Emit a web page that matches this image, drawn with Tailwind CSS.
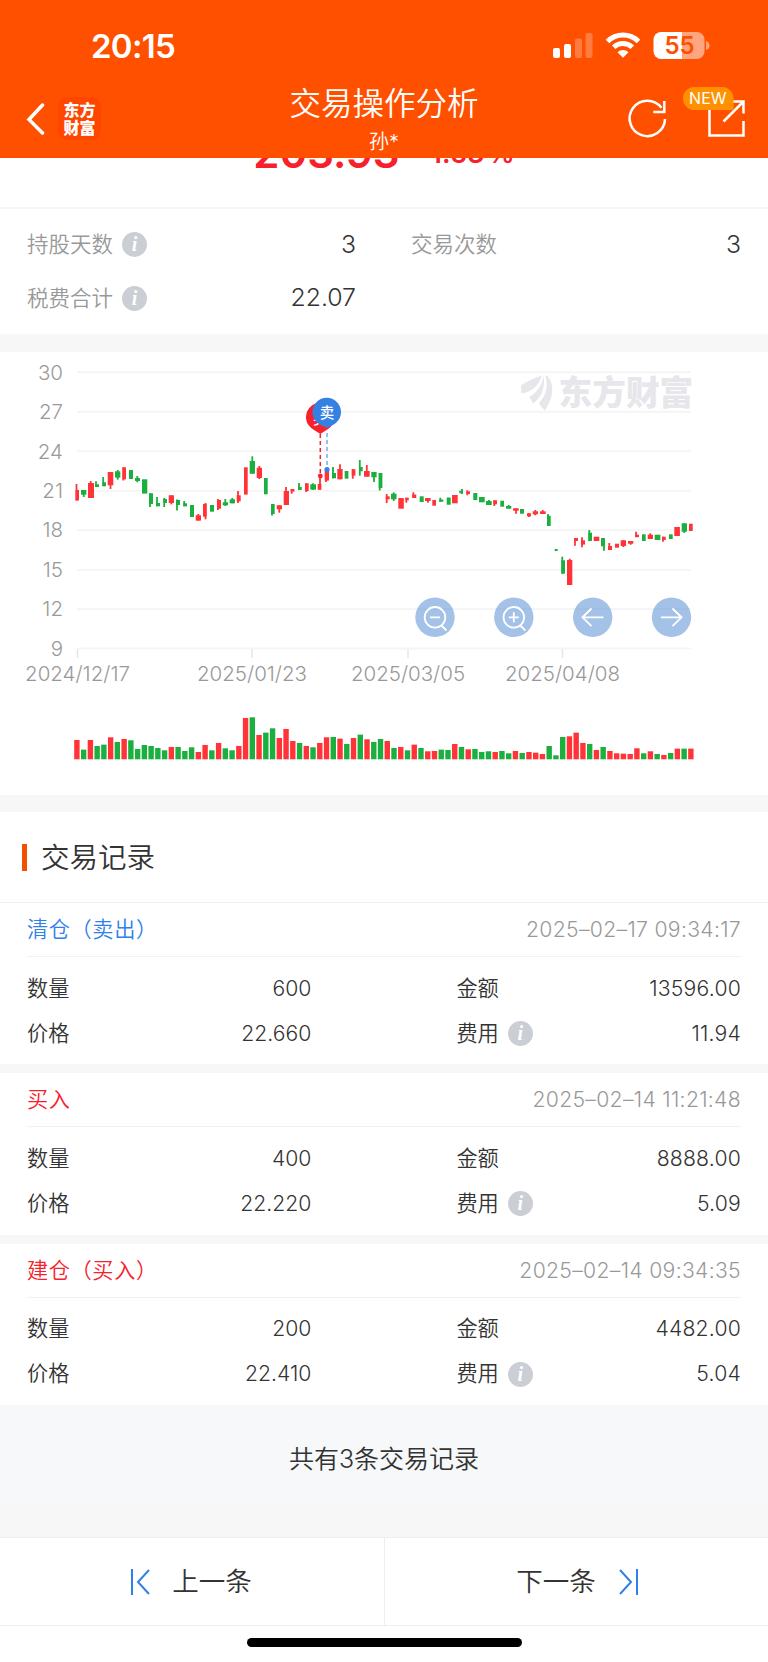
<!DOCTYPE html>
<html lang="zh-CN">
<head>
    <meta charset="UTF-8">
    <meta name="viewport" content="width=device-width, initial-scale=1.0">
    <title>交易操作分析</title>
    <script src="https://cdn.jsdelivr.net/npm/@tailwindcss/browser@4"></script>
</head>
<body class="bg-white font-['Inter','Noto_Sans_CJK_SC',sans-serif] font-[350] text-[#333]">
    <div class="w-[768px] h-[1662px] flex flex-col overflow-hidden">
        <!-- 顶部 -->
        <header class="h-[158px] shrink-0 bg-[#ff5000] text-white flex flex-col">
            <div class="h-[84px] pt-2 pl-[91px] pr-[58px] flex items-center justify-between">
                <span class="text-[33px] font-semibold leading-none tracking-[-0.7px]">20:15</span>
                <svg class="w-[158px] h-[28px]" viewBox="552 32 158 28">
                    <g fill="#fff">
                        <rect x="553" y="48" width="7" height="10" rx="2"/>
                        <rect x="564" y="44" width="7" height="14" rx="2"/>
                        <rect x="575" y="38.500" width="7" height="19.500" rx="2" opacity=".25"/>
                        <rect x="585.500" y="33" width="7" height="25" rx="2" opacity=".25"/>
                    </g>
                    <g fill="none" stroke="#fff" stroke-width="5">
                        <path d="M607.500 41.500a22 22 0 0 1 31 0"/>
                        <path d="M613.700 47.300a13.200 13.200 0 0 1 18.600 0"/>
                    </g>
                    <path d="M617.500 52.300a8 8 0 0 1 11 0L623 57.800z" fill="#fff"/>
                    <path d="M661 32h21v27h-21a7.500 7.500 0 0 1-7.500-7.500v-12a7.500 7.500 0 0 1 7.500-7.500z" fill="#fff"/>
                    <path d="M682 32h15a7.500 7.500 0 0 1 7.500 7.500v12a7.500 7.500 0 0 1-7.500 7.500h-15z" fill="#ffa680"/>
                    <path d="M706 41q3.500 1 3.500 4.500t-3.500 4.500z" fill="#ffa680"/>
                    <text x="679.500" y="54" text-anchor="middle" font-size="24" font-weight="600" fill="#ff5000">55</text>
                </svg>
            </div>
            <div class="relative h-[74px] flex items-start">
                <svg class="ml-[26px] mt-[19px] w-5 h-8" viewBox="0 0 20 32" fill="none" stroke="#fff" stroke-width="3.500" stroke-linecap="round"><path d="M16.500 2 3 16.500 16.500 30"/></svg>
                <div class="ml-3 mt-[13px] w-[43px] h-[43px] rounded-[9px] bg-[#ff4600] flex flex-col items-center justify-center text-[16px] leading-[18px] font-black">
                    <span>东方</span>
                    <span>财富</span>
                </div>
                <div class="absolute inset-x-0 top-[1px] flex flex-col items-center">
                    <span class="text-[31.500px] leading-[38px]">交易操作分析</span>
                    <span class="mt-[6px] text-[20px] leading-[26px]">孙*</span>
                </div>
                <svg class="ml-auto mr-[22px] mt-[2px] w-[122px] h-[54px]" viewBox="624 86 122 54">
                    <g fill="none" stroke="#fff" stroke-width="2.500">
                        <path d="M665 119a17.700 17.700 0 1 1-3.500-11.200"/>
                        <path d="M664.300 101v11h-11"/>
                        <path d="M709.500 105v30.500h34V121"/>
                        <path d="M732 101.500h11.500v12M743 102l-19.500 19.500"/>
                    </g>
                    <path d="M694.500 87H722a11.500 11.500 0 0 1 11.500 11.500V110h-39a11.500 11.500 0 0 1 0-23z" fill="#ff9100"/>
                    <text x="707.800" y="104" text-anchor="middle" font-size="16" font-weight="400" fill="#fff">NEW</text>
                </svg>
            </div>
        </header>

        <!-- 收益（滚动后被顶部遮住） -->
        <div class="h-[51px] shrink-0 overflow-hidden border-b-2 border-[#f7f7f7]">
            <div class="-mt-[30px] flex items-baseline justify-center gap-[31px] font-semibold text-[#f8202b]">
                <span class="text-[42px] leading-[50px]">203.93</span>
                <span class="relative -top-[5px] text-[27px]">1.53<span class="ml-[3px]">%</span></span>
            </div>
        </div>

        <!-- 概况 -->
        <section class="h-[125px] shrink-0 pt-[9px] px-[27px] text-[21.500px]">
            <div class="flex h-[53px] items-center">
                <div class="w-[329px] flex items-center">
                    <span class="text-[#999]">持股天数</span>
                    <i class="ml-[9px] size-[25px] rounded-full bg-[#cbced5] text-white text-[20px] leading-[24px] text-center font-bold font-['Liberation_Serif',serif]">i</i>
                    <span class="ml-auto text-[24.800px]">3</span>
                </div>
                <span class="ml-[55px] text-[#999]">交易次数</span>
                <span class="ml-auto text-[24.800px]">3</span>
            </div>
            <div class="flex h-[54px] w-[329px] items-center">
                <span class="text-[#999]">税费合计</span>
                <i class="ml-[9px] size-[25px] rounded-full bg-[#cbced5] text-white text-[20px] leading-[24px] text-center font-bold font-['Liberation_Serif',serif]">i</i>
                <span class="ml-auto text-[24.800px]">22.07</span>
            </div>
        </section>
        <div class="h-[18px] shrink-0 bg-[#f7f7f7]"></div>

        <!-- K线图 -->
        <svg class="w-[768px] h-[443px] shrink-0" viewBox="0 352 768 443">
            <g id="grid" font-size="20.500" fill="#999"></g>
            <g fill="#e6e6eb">
                <path d="M521 385.500Q530 379 542 375.500Q537 391 521.500 393.500zM529.500 397Q541 390 543.700 376Q546 394 533 403.500zM547 375.500Q558.500 389 545 410.500Q541 407 539 403Q550 391 545.500 376z"/>
                <text x="558.500" y="404.500" font-size="33.700" font-weight="900">东方财富</text>
            </g>
            <g id="candles"></g>
            <g id="volumes"></g>
            <path d="M320.300 434v42" stroke="#f8202b" stroke-width="1.500" stroke-dasharray="4 3"/>
            <path d="M327 433v36" stroke="#8fb8ee" stroke-width="1.800" stroke-dasharray="4 3"/>
            <circle cx="320.300" cy="476" r="2.400" fill="#f8202b"/>
            <circle cx="327" cy="469.700" r="2.600" fill="#3581e3"/>
            <path d="M320.300 434l-7-4.500a14.300 14.300 0 1 1 14 0z" fill="#f8202b"/>
            <text x="320.300" y="423.500" text-anchor="middle" font-size="14.500" font-weight="500" fill="#fff">买</text>
            <path d="M326.700 428l-7-3.500a14.300 14.300 0 1 1 14 0z" fill="#3581e3"/>
            <text x="327" y="417.500" text-anchor="middle" font-size="14.500" font-weight="500" fill="#fff">卖</text>
            <g fill="#5c93d6" fill-opacity=".56">
                <circle cx="435" cy="617.300" r="19.700"/>
                <circle cx="513.800" cy="617.300" r="19.700"/>
                <circle cx="592.700" cy="617.300" r="19.700"/>
                <circle cx="671.500" cy="617.300" r="19.700"/>
            </g>
            <g fill="none" stroke="#fff" stroke-width="1.800">
                <circle cx="435" cy="617.300" r="10.300"/>
                <path d="M430 617.300h10M441 625l5.500 5.500"/>
                <circle cx="513.800" cy="617.300" r="10.300"/>
                <path d="M508.800 617.300h10M513.800 612.300v10M519.800 625l5.500 5.500"/>
                <path d="M603.500 617.300h-21M591.500 608.500l-9 8.800 9 8.800"/>
                <path d="M661 617.300h21M672.500 608.500l9 8.800-9 8.800"/>
            </g>
        </svg>
        <div class="h-[17px] shrink-0 bg-[#f7f7f7]"></div>

        <!-- 交易记录 -->
        <h2 class="h-[91px] shrink-0 pl-[22px] pt-[1px] flex items-center border-b border-[#f2f2f2] text-[28.500px]">
            <span class="mr-[14px] w-[5px] h-[27px] bg-[#f05000]"></span><span class="pt-[2px]">交易记录</span>
        </h2>
        <div id="records" class="shrink-0 text-[21.200px]"></div>
        <div class="h-[100px] shrink-0 bg-[#f7f8fa] pt-[38px] text-center text-[25px] leading-[32px]">共有3条交易记录</div>
        <div class="h-[32px] shrink-0 bg-[#f7f7f7]"></div>

        <!-- 底部 -->
        <nav class="h-[89px] shrink-0 grid grid-cols-2 border-y border-[#eee] text-[26.500px]">
            <a class="flex items-center justify-center gap-[22px] pr-[2px]">
                <svg class="w-5 h-[26px]" viewBox="0 0 20 26" fill="none" stroke="#2f80ed" stroke-width="2"><path d="M2 0v26M19 1 8 13l11 12"/></svg>
                上一条
            </a>
            <a class="flex items-center justify-center gap-[23px] border-l border-[#eee] pl-[2px]">
                下一条
                <svg class="w-5 h-[26px]" viewBox="0 0 20 26" fill="none" stroke="#2f80ed" stroke-width="2"><path d="M18 0v26M1 1l11 12L1 25"/></svg>
            </a>
        </nav>
        <div class="mt-[12px] mx-auto w-[275px] h-[9px] shrink-0 rounded-full bg-black"></div>
    </div>

    <script>
        const RED = '#ff3338', GREEN = '#1aaf3e';

        // 坐标轴
        let grid = '';
        [30, 27, 24, 21, 18, 15, 12, 9].forEach((v, i) => {
            const y = 372.3 + i * 39.47;
            grid += `<path d="M77 ${y}H691" stroke="#f5f5f5" stroke-width="2"/><text x="63" y="${y + 7.3}" text-anchor="end">${v}</text>`;
        });
        [[77.5, '2024/12/17'], [252, '2025/01/23'], [408, '2025/03/05'], [562.5, '2025/04/08']].forEach(([x, t]) => {
            grid += `<path d="M${x} 649v9" stroke="#e6e6e6" stroke-width="1.5"/><text x="${x}" y="681" text-anchor="middle">${t}</text>`;
        });
        document.getElementById('grid').innerHTML = grid;

        // K线: 颜色 实体x y 宽 高 影线x 最高 最低
        const candles = `R 75.5 490 3.5 10.5 76.5 484 500.5
G 81 490 5.3 4.7 83.7 490 497
R 88 483 6 15 90.7 481 498
G 95 484.3 4 2.7 96 481.3 487
G 102.3 482.3 3.7 4 103.2 477 486
R 107.7 472 5.6 13.3 110.5 472 489
G 115 471.3 5.3 6.3 117.7 470 479.7
R 122.5 467.3 3.5 12 123.3 467.3 480.5
G 129 470 4 9
G 135 478 5 3 137.3 476 482.3
G 142 479.3 5.3 14.3
G 149 493.3 4 10.7 150 493.3 507
G 156 503 4 3.3 157 497 506.3
G 163.3 499 3.7 4 164.2 498 507
R 168.7 495.3 5.3 7.7 171.3 495.3 504.3
G 176 500 4 5 177 499.5 510.5
G 183.3 503.3 3.7 3 184.2 501 506.3
G 190 505 4 12
R 195.7 515.3 5.3 5.3 198.3 514 520.7
R 203 504 3.7 12.7 205.5 503 519.3
G 210 505 4 6.7
R 217 500 4 8.7 218 499 510
G 222.7 502.3 5.3 3 225.3 499 506
G 229.7 499.3 5.3 4 232.3 498 503.3
R 236.7 495.3 4 6 238 491 503
R 244 467.3 3.7 27.3
G 249.7 461 5.3 12.7 252.3 456.3 473.7
R 256.7 467.7 5.3 10.3 259.3 466 479
G 264 478 3.7 16.3
G 271 504 3.7 10 272 504 515.5
R 276.7 505.3 5.3 4 279.3 505.3 512.7
R 283.7 491 5.3 14 286 487 505
R 290.7 489 3.7 2.7 291.7 489 493.7
G 298 487 3.7 3 299 483 490
R 305 483.3 3.7 7.7 306.3 483.3 492
G 310.3 484.3 5.7 5.3 313 483.3 489.7
R 317.7 484 3.7 5.7 320 475 489.7
R 324.7 471.3 4.3 9.3 326 470 482
G 332 473 4 5.3 333 467 478.3
R 337.3 469 5.3 10.3 340 464.3 479.3
G 344.7 471 3.7 7.7
R 351.7 469.3 3.7 6.3 352.8 469 478.7
G 359 467 3.7 4.3 359.8 460 475.7
R 364 471 5.7 5.7 366.8 465 476.7
G 371.3 472 5.3 5.3 374 472 482
G 378.7 473 3.7 15 379.7 473 490.5
R 385.7 496.3 4 3 386.7 494 503
G 391 493.7 5.5 5.6 393.7 492.3 501
R 398.3 498 5.5 10.7
R 405.3 497.7 3.5 2.6 406.3 497.7 502.7
R 412.3 494.5 4 3.5 413.3 492.3 498
G 419.7 496.3 4 5.7
R 425 498 5.6 3 428 498 502.7
R 432.3 500 3.7 5.7
G 439.3 499.5 4 2.2 440.3 497.7 502
G 446.7 497.5 4 7.2
R 452 495 5.7 8.3
G 459.3 490.7 3.7 2.6 462 489 494
R 466.3 491.3 3.7 2.7 467.3 490.3 495.3
G 473.3 493 4 7
G 479 497 5.7 5.3
G 486 501 5.7 4 489 500 505
R 493.3 500.3 3.7 4 494.3 500.3 506
G 500.3 500.7 3.7 6
G 506 506 5.3 2.7 508.7 505 508.7
R 513 508.3 5.7 2.4 516 508.3 513.7
G 520 509 4 4.7
R 527 513.3 4 3 529 513.3 517
R 532.7 511.3 5.3 3 535.3 510 515.3
R 540 511.3 5.7 2.7 542.7 510 514
G 547 515.7 3.7 10.3 548 514 526
G 554.7 549 3 2
G 561.3 560.3 3.7 13.4 562.3 556.7 573.7
R 567 560 5.3 25 569.7 558.7 585
R 574 538 4 3 575 538 545.7
R 581 540.3 4 4.3 582 537.3 547.3
G 588.3 532.7 3.7 8.3 589.3 530 541
R 593.7 536.7 5.6 4.3
G 601 538 3.7 8.3 604 538 550.7
R 608 546 4 4 609.3 543 550
R 615 543.7 4 4
R 620.7 540.3 5.3 5.7 623.3 540.3 547
R 628 541 5.3 2.7 630.7 541 544.7
R 635 534.7 4 2.5 636 531.7 537
G 642 534.3 3.7 6.7
R 647.7 534.7 5.3 4.3 650.3 533.3 539
G 654.7 534.7 5.7 5.3
R 662 536.7 3.7 3.3 663 536.7 541.7
G 669 534.3 3.7 4.7
R 674.3 527 5.6 9
G 681.7 523.3 5.3 8.4 684.3 523.3 533
R 689 523.7 3.7 7.3`;
        document.getElementById('candles').innerHTML = candles.split('\n').map(line => {
            const [c, x, y, w, h, wx, hi, lo] = line.split(' ');
            const color = c === 'R' ? RED : GREEN;
            const wick = wx ? `<path d="M${wx} ${hi}V${lo}" stroke="${color}" stroke-width="1.8"/>` : '';
            return `<rect x="${x}" y="${y}" width="${w}" height="${h}" fill="${color}"/>${wick}`;
        }).join('');

        // 成交量
        const volumes = 'R58 G29 R58 G40 G44 R66 G52 R61 G57 G31 G43 G40 G34 G27 R37 G37 G25 G36 R22 R43 G27 R49 G33 G27 R40 R124 G126 R73 G80 G93 R64 R91 R55 G49 R40 G36 R49 R66 G67 R62 G46 R64 G74 R60 G52 G61 R55 G34 R37 G27 R44 G34 R24 R25 G29 G28 R46 G37 R30 G31 G22 G24 R22 G25 G18 R25 G19 R22 R20 R16 G40 G12 G67 R69 R80 R49 G46 R28 G37 R25 R18 R17 R16 R33 G18 R24 G16 R13 G19 R32 G32 R32';
        document.getElementById('volumes').innerHTML = volumes.split(' ').map((v, i) => {
            const h = v.slice(1) / 3;
            return `<rect x="${74.2 + i * 6.747}" y="${759.3 - h}" width="5.4" height="${h}" fill="${v[0] === 'R' ? RED : GREEN}"/>`;
        }).join('');

        const records = [
            { title: '清仓（卖出）', color: 'text-[#2f80ed]', time: '2025–02–17 09:34:17', qty: '600', amount: '13596.00', price: '22.660', fee: '11.94' },
            { title: '买入', color: 'text-[#f8202b]', time: '2025–02–14 11:21:48', qty: '400', amount: '8888.00', price: '22.220', fee: '5.09' },
            { title: '建仓（买入）', color: 'text-[#f8202b]', time: '2025–02–14 09:34:35', qty: '200', amount: '4482.00', price: '22.410', fee: '5.04' },
        ];
        document.getElementById('records').innerHTML = records.map((r, i) => `
            <div class="${i ? 'h-[170.500px] border-t-[9px] border-[#f7f7f7]' : 'h-[161px]'}">
                <div class="mx-[27px] h-[54px] pt-[1px] flex items-center justify-between border-b border-[#f2f2f2]">
                    <span class="tracking-[0.600px] ${r.color}">${r.title}</span>
                    <span class="tracking-[0.300px] text-[#999]">${r.time}</span>
                </div>
                <div class="px-[27px] pt-[9px]">
                    <div class="h-[45px] flex items-center">
                        <span>数量</span>
                        <span class="w-[242px] text-right">${r.qty}</span>
                        <span class="ml-[145px]">金额</span>
                        <span class="ml-auto tracking-[0.200px]">${r.amount}</span>
                    </div>
                    <div class="h-[45px] flex items-center">
                        <span>价格</span>
                        <span class="w-[242px] text-right">${r.price}</span>
                        <span class="ml-[145px]">费用</span>
                        <i class="ml-[9px] size-[25px] rounded-full bg-[#cbced5] text-white text-[20px] leading-[24px] text-center font-bold font-['Liberation_Serif',serif]">i</i>
                        <span class="ml-auto tracking-[0.200px]">${r.fee}</span>
                    </div>
                </div>
            </div>`).join('');
    </script>
</body>
</html>
